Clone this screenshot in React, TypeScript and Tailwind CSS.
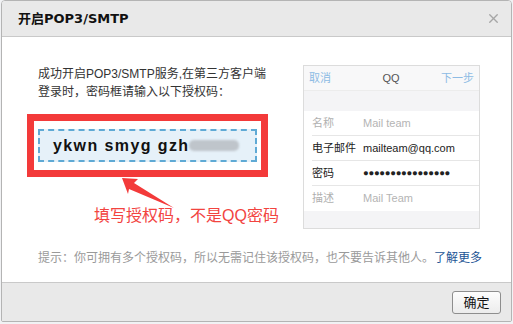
import { X } from 'lucide-react';

const cjk = '"Liberation Sans", "Noto Sans CJK SC", sans-serif';

function PhonePreview() {
  return (
    <div className="w-[177px] h-[164px] border border-[#dcdcdc] bg-[#f4f4f6] flex flex-col text-[11px] leading-none">
      {/* nav bar */}
      <div className="h-[25px] flex items-center justify-between px-[5px] bg-[#f8f8f9] border-b border-[#ececec]">
        <span className="text-[#8dbbe4]">取消</span>
        <span className="text-[#555] pl-[10px]">QQ</span>
        <span className="text-[#8dbbe4]">下一步</span>
      </div>
      <div className="h-[20px]" />
      <div className="bg-white flex flex-col">
        <Row label="名称" value="Mail team" muted />
        <Row label="电子邮件" value="mailteam@qq.com" />
        <Row label="密码" value="●●●●●●●●●●●●●●●●" dots />
        <Row label="描述" value="Mail Team" muted last />
      </div>
    </div>
  );
}

function Row({ label, value, muted, dots, last }: { label: string; value: string; muted?: boolean; dots?: boolean; last?: boolean }) {
  return (
    <div className="pl-[8px]">
      <div className={`h-[25px] flex items-center ${last ? '' : 'border-b border-[#e6e6e6]'}`}>
        <span className={`w-[51px] ${muted ? 'text-[#b0b0b0]' : 'text-[#222]'}`}>{label}</span>
        <span className={`${muted ? 'text-[#b4b4b4]' : 'text-[#222]'} ${dots ? 'text-[9.5px] tracking-[-0.3px]' : ''}`}>{value}</span>
      </div>
    </div>
  );
}

export default function App() {
  return (
    <div className="w-[513px] h-[324px] bg-[#f1f2f4]" style={{ fontFamily: cjk }}>
      <div className="relative ml-[1px] w-[511px] h-[322px] border border-[#b4b4b4] rounded-t-[4px] rounded-b-[2px] bg-white flex flex-col overflow-hidden">
        {/* header */}
        <div className="h-[36px] shrink-0 bg-[#e9e9e9] border-b border-[#c9c9c9] flex items-center justify-between pl-[16px] pr-[10px]">
          <span className="text-[13px] font-bold text-[#111]" style={{ fontFamily: '"DejaVu Sans", "Noto Sans CJK SC", sans-serif' }}>
            开启POP3/SMTP
          </span>
          <X size={15} strokeWidth={2.2} className="text-[#a6a6a6]" />
        </div>

        {/* body */}
        <div className="h-[245px] shrink-0 flex flex-col pt-[28px] pl-[25px]">
          <div className="flex">
            <div className="w-[276px] flex flex-col">
              <p className="pl-[11px] text-[12px] leading-[18px] text-[#333]">
                成功开启POP3/SMTP服务,在第三方客户端
                <br />
                登录时，密码框请输入以下授权码：
              </p>
              <div className="mt-[13px] w-[241px] h-[63px] border-[7px] border-[#f33a3a] bg-white pt-[8px] pl-[4px]">
                <div className="w-[219px] h-[33px] border-2 border-dashed border-[#5faad5] bg-[#e6f1f9] flex items-center pl-[13px]">
                  <span className="text-[16px] font-bold tracking-[1.4px] text-[#111]">ykwn smyg gzh</span>
                  <span className="w-[50px] h-[11px] rounded-[5px] bg-[#bfc5cb] blur-[1px]" />
                </div>
              </div>
              <div className="mt-[28px] pl-[67px] text-[16px] leading-[22px] text-[#f2443f]">填写授权码，不是QQ密码</div>
            </div>
            <PhonePreview />
          </div>
          <p className="mt-[20px] pl-[11px] text-[12px] leading-[18px] text-[#9a9a9a]">
            提示：你可拥有多个授权码，所以无需记住该授权码，也不要告诉其他人。
            <span className="text-[#1d5595]">了解更多</span>
          </p>
        </div>

        {/* footer */}
        <div className="flex-1 bg-[#e9e9e9] border-t border-[#c9c9c9] flex items-center justify-end pr-[10px]">
          <button className="w-[49px] h-[23px] rounded-[3px] border border-[#8e8e8e] bg-gradient-to-b from-[#fdfdfd] to-[#ececec] text-[13px] text-[#111] leading-none">
            确定
          </button>
        </div>

        {/* annotation arrow */}
        <svg className="absolute left-0 top-0 pointer-events-none" width="511" height="322" viewBox="0 0 511 322">
          <polygon points="120,177 136,178 132,182 172,207 127,188 126,193" fill="#f33a3a" />
        </svg>
      </div>
    </div>
  );
}
